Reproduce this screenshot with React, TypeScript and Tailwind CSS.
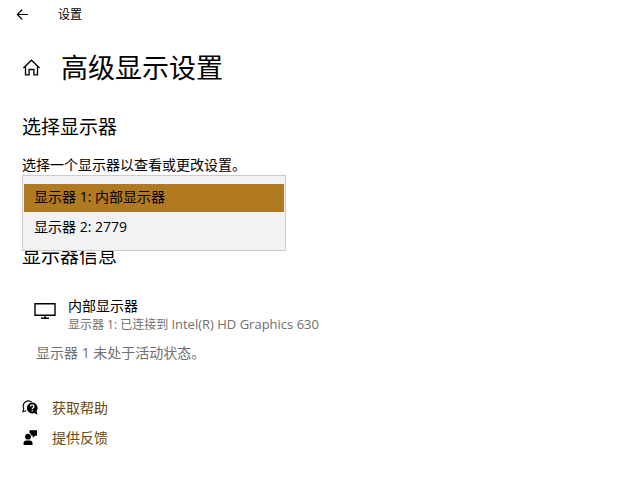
import { useState } from "react";

const displays = ["显示器 1: 内部显示器", "显示器 2: 2779"];

function BackIcon() {
  return (
    <svg className="size-3" viewBox="0 0 12 12" fill="none" stroke="currentColor" strokeWidth="1.1" aria-hidden="true">
      <path d="M12 5.500H1.500M6.300 .5L1.300 5.500l5 5" />
    </svg>
  );
}

function HomeIcon() {
  return (
    <svg className="size-4.5" viewBox="0 0 18 18" fill="none" stroke="currentColor" strokeWidth="1.3" aria-hidden="true">
      <path d="M1.400 9L9.500 1.200 17.600 9" />
      <path d="M3.500 7.200v8.700h3.600v-5.400h4.800v5.400h3.600V7.200" />
    </svg>
  );
}

function MonitorIcon() {
  return (
    <svg className="h-4.5 w-5.5 shrink-0" viewBox="0 0 22 18" fill="none" stroke="currentColor" strokeWidth="1.4" aria-hidden="true">
      <path d="M1 1.700h20v11.600H1zM11 13.300v3M7 16.300h8" />
    </svg>
  );
}

function HelpIcon() {
  return (
    <svg className="size-4 shrink-0" viewBox="0 0 16 16" aria-hidden="true">
      <path d="M9.800 2.200A5.200 5.200 0 0 0 1.700 8.300L.9 11.700l3.400-1" fill="none" stroke="currentColor" strokeWidth="1.100" />
      <path d="M10.100 2.500a5.500 5.500 0 1 0 2.300 10.600l3 1.700-.8-3.700a5.500 5.500 0 0 0-4.500-8.600z" fill="currentColor" />
      <path d="M8.500 6.600c0-2.200 3.400-2.200 3.400-.1 0 1.300-1.700 1.300-1.700 2.800M10.200 10.200v1.400" fill="none" stroke="white" strokeWidth="1.300" />
    </svg>
  );
}

function FeedbackIcon() {
  return (
    <svg className="size-4 shrink-0" viewBox="0 0 16 16" fill="currentColor" aria-hidden="true">
      <circle cx="6" cy="6.700" r="2.900" />
      <path d="M1.600 15v-2c0-1.800 1-2.600 2.600-2.600h3.700c1.700 0 2.600.8 2.600 2.600v2z" />
      <path d="M7.500 .3H15v5.500h-2L10.800 8V5.800H9.600C9.300 4.300 8.700 3.400 7.500 2.900z" />
    </svg>
  );
}

export default function App() {
  const [selected, setSelected] = useState(0);

  return (
    <div className="min-h-screen bg-white font-['Open_Sans','Noto_Sans_CJK_SC',sans-serif] text-sm leading-5 text-black">
      <header className="flex h-7 items-center gap-6 px-4 pt-0.5">
        <button type="button" aria-label="返回" className="pr-0.5">
          <BackIcon />
        </button>
        <span className="pl-1 text-xs">设置</span>
      </header>

      <main className="px-[22px] pt-5">
        <div className="flex items-center gap-[21px]">
          <button type="button" aria-label="主页">
            <HomeIcon />
          </button>
          <h1 className="text-[27px] leading-10">高级显示设置</h1>
        </div>

        <section className="pt-[25px]">
          <h2 className="text-[19px] leading-7">选择显示器</h2>
          <p id="display-label" className="pt-3.5">选择一个显示器以查看或更改设置。</p>
          <div className="relative h-[67px]">
            <div
              role="listbox"
              aria-labelledby="display-label"
              className="absolute top-0 left-0 flex w-[264px] flex-col gap-0.5 border border-[#cccccc] bg-[#f2f2f2] px-px py-2"
            >
              {displays.map((name, index) => (
                <button
                  key={name}
                  type="button"
                  role="option"
                  aria-selected={index === selected}
                  onClick={() => setSelected(index)}
                  className="h-7 px-2.5 pb-0.5 text-left aria-selected:bg-[#b27a20]"
                >
                  {name}
                </button>
              ))}
            </div>
          </div>
        </section>

        <section>
          <h2 className="text-[19px] leading-7">显示器信息</h2>
          <div className="flex gap-3 px-3 pt-7">
            <div className="pt-1">
              <MonitorIcon />
            </div>
            <div>
              <h3 className="leading-4">内部显示器</h3>
              <p className="text-xs leading-5 text-[#707070]">
                显示器 1: 已连接到 <span className="text-[13px]">Intel(R) HD Graphics 630</span>
              </p>
            </div>
          </div>
          <p className="px-3.5 pt-2 text-[#707070]">显示器 1 未处于活动状态。</p>
        </section>

        <nav className="flex flex-col items-start gap-2.5 pt-[35px] text-[#694a0c]">
          <a href="#help" className="flex items-center gap-3.5">
            <span className="text-black"><HelpIcon /></span>
            获取帮助
          </a>
          <a href="#feedback" className="flex items-center gap-3.5">
            <span className="text-black"><FeedbackIcon /></span>
            提供反馈
          </a>
        </nav>
      </main>
    </div>
  );
}
